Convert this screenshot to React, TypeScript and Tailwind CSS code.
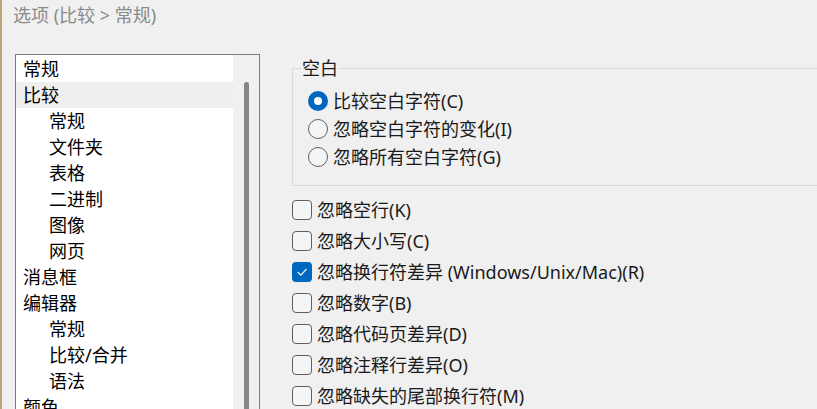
import React from "react";

const treeItems = [
  { label: "常规", level: 0 },
  { label: "比较", level: 0, selected: true },
  { label: "常规", level: 1 },
  { label: "文件夹", level: 1 },
  { label: "表格", level: 1 },
  { label: "二进制", level: 1 },
  { label: "图像", level: 1 },
  { label: "网页", level: 1 },
  { label: "消息框", level: 0 },
  { label: "编辑器", level: 0 },
  { label: "常规", level: 1 },
  { label: "比较/合并", level: 1 },
  { label: "语法", level: 1 },
  { label: "颜色", level: 0 },
];

const radios = [
  { label: "比较空白字符(C)", checked: true },
  { label: "忽略空白字符的变化(I)", checked: false },
  { label: "忽略所有空白字符(G)", checked: false },
];

const checks = [
  { label: "忽略空行(K)", checked: false },
  { label: "忽略大小写(C)", checked: false },
  { label: "忽略换行符差异 (Windows/Unix/Mac)(R)", checked: true },
  { label: "忽略数字(B)", checked: false },
  { label: "忽略代码页差异(D)", checked: false },
  { label: "忽略注释行差异(O)", checked: false },
  { label: "忽略缺失的尾部换行符(M)", checked: false },
];

function Radio({ checked }: { checked: boolean }) {
  return checked ? (
    <div className="flex h-[20px] w-[20px] shrink-0 items-center justify-center rounded-full bg-[#0067c0]">
      <div className="h-[8px] w-[8px] rounded-full bg-white" />
    </div>
  ) : (
    <div className="h-[20px] w-[20px] shrink-0 rounded-full border border-[#5f5f5f] bg-[#f5f5f5]" />
  );
}

function Checkbox({ checked }: { checked: boolean }) {
  return checked ? (
    <div className="flex h-[20px] w-[20px] shrink-0 items-center justify-center rounded-[4px] bg-[#0067c0]">
      <svg width="20" height="20" viewBox="0 0 20 20" fill="none">
        <path d="M6 10.4l2.8 2.7L14.2 7.4" stroke="white" strokeWidth="1.2" strokeLinecap="round" strokeLinejoin="round" />
      </svg>
    </div>
  ) : (
    <div className="h-[20px] w-[20px] shrink-0 rounded-[4px] border border-[#5f5f5f] bg-[#f5f5f5]" />
  );
}

export default function App() {
  return (
    <div
      className="flex h-[409px] w-[817px] overflow-hidden bg-[#f0f0f0] text-[#1a1a1a]"
      style={{ fontFamily: '"Noto Sans", "Noto Sans CJK SC", sans-serif' }}
    >
      {/* window edge behind */}
      <div className="w-[2px] shrink-0 bg-[#b6a679]" />

      <div className="flex min-w-0 flex-1 flex-col">
        {/* Title */}
        <div className="h-[54px] shrink-0 pl-[11px] pt-[3px] text-[18px] leading-[24px] text-[#8a8a8a]">
          选项 (比较 &gt; 常规)
        </div>

        <div className="flex min-h-0 flex-1">
          {/* Tree list */}
          <div className="ml-[13px] flex h-[400px] w-[245px] shrink-0 border border-b-0 border-[#7a7a7a] bg-white">
            <div className="flex-1 pt-[1px]">
              {treeItems.map((item, i) => (
                <div
                  key={i}
                  className={`h-[26px] whitespace-nowrap text-[18px] leading-[26px] text-black ${
                    item.level === 1 ? "pl-[33px]" : "pl-[7px]"
                  } ${item.selected ? "bg-[#efefef]" : ""}`}
                >
                  {item.label}
                </div>
              ))}
            </div>
            <div className="w-[26px] shrink-0 bg-[#f0f0f0] pt-[27px] pl-[11px]">
              <div className="h-full w-[5px] rounded-t-full bg-[#858585]" />
            </div>
          </div>

          {/* Options */}
          <div className="ml-[32px] flex min-w-0 flex-1 flex-col pt-[14px]">
            <div className="relative h-[118px] w-[600px] shrink-0 border border-r-0 border-[#d9d9d9] pt-[18px] pl-[15px]">
              <span className="absolute left-[8px] top-[-13px] bg-[#f0f0f0] px-[1px] text-[18px] leading-[24px]">
                空白
              </span>
              {radios.map((r, i) => (
                <div key={i} className="flex h-[28px] items-center gap-[5px] whitespace-nowrap text-[18px]">
                  <Radio checked={r.checked} />
                  <span className="leading-[24px]">{r.label}</span>
                </div>
              ))}
            </div>

            <div className="mt-[8px] flex flex-col">
              {checks.map((c, i) => (
                <div key={i} className="flex h-[31px] shrink-0 items-center gap-[5px] whitespace-nowrap text-[18px]">
                  <Checkbox checked={c.checked} />
                  <span className="leading-[24px]">{c.label}</span>
                </div>
              ))}
            </div>
          </div>
        </div>
      </div>
    </div>
  );
}
